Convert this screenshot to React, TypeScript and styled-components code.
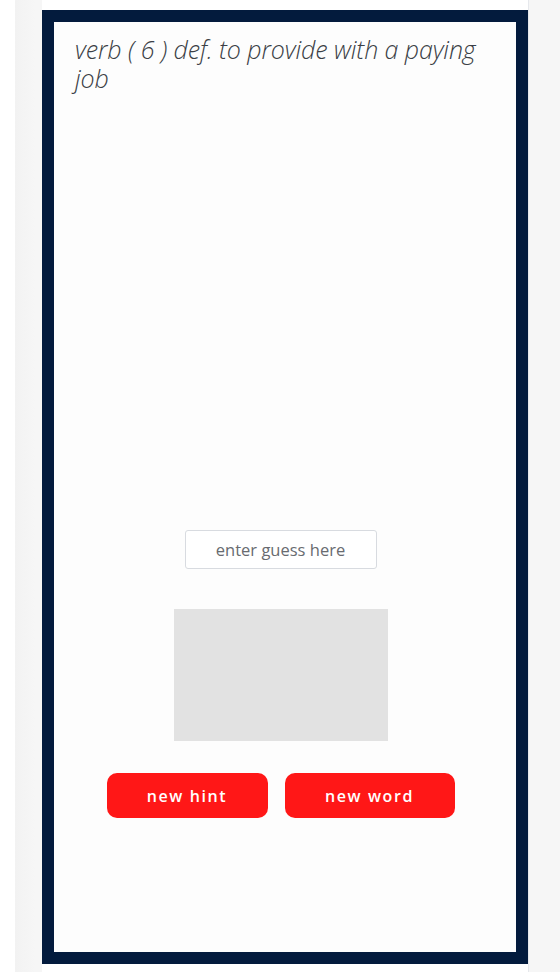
import styled, { createGlobalStyle } from "styled-components";

const GlobalStyle = createGlobalStyle`
  html, body {
    margin: 0;
    padding: 0;
    background: #ffffff;
  }
  body {
    font-family: "Open Sans", "Liberation Sans", sans-serif;
  }
`;

// 바깥 배경
const Page = styled.div`
  margin-left: 15px;
  width: 545px;
  height: 972px;
  background: linear-gradient(to right, #f2f2f2, #f6f6f6 20px, #f6f6f6);
  display: flex;
  padding-left: 27px;
  box-sizing: border-box;
`;

// 흰색 카드 컬럼
const Column = styled.div`
  width: 487px;
  background: #ffffff;
  padding-top: 10px;
  box-sizing: border-box;
  border-right: 1px solid #e6e8ec;
`;

// 남색 테두리 박스
const Frame = styled.div`
  height: 954px;
  border: 12px solid #031b3d;
  background: #fdfdfd;
  box-sizing: border-box;
  padding-right: 9px;
  display: flex;
  flex-direction: column;
  align-items: center;
`;

const Definition = styled.div`
  align-self: stretch;
  height: 63px;
  padding: 13px 20px 0 21px;
  font-size: 25px;
  font-style: italic;
  font-weight: 300;
  line-height: 29px;
  color: #3b3f46;
  letter-spacing: -0.1px;
`;

const GuessInput = styled.input`
  margin-top: 432px;
  width: 192px;
  height: 39px;
  box-sizing: border-box;
  border: 1px solid #d8dbe0;
  border-radius: 3px;
  background: #ffffff;
  font-family: "Open Sans", "Liberation Sans", sans-serif;
  font-size: 16.5px;
  text-align: center;
  color: #333;
  outline: none;

  &::placeholder {
    color: #686b70;
  }
`;

const HintBox = styled.div`
  margin-top: 40px;
  width: 214px;
  height: 132px;
  background: #e2e2e2;
`;

const ButtonRow = styled.div`
  margin-top: 32px;
  display: flex;
  gap: 17px;
`;

const ActionButton = styled.button<{ $width: number }>`
  width: ${(p) => p.$width}px;
  height: 45px;
  border: none;
  border-radius: 10px;
  background: #ff1717;
  color: #ffffff;
  font-family: "Open Sans", "Liberation Sans", sans-serif;
  font-size: 16px;
  font-weight: 600;
  letter-spacing: 1.6px;
  cursor: pointer;
`;

export default function App() {
  return (
    <>
      <GlobalStyle />
      <Page>
        <Column>
          <Frame>
            <Definition>verb ( 6 ) def. to provide with a paying job</Definition>
            <GuessInput placeholder="enter guess here" />
            <HintBox />
            <ButtonRow>
              <ActionButton $width={161}>new hint</ActionButton>
              <ActionButton $width={170}>new word</ActionButton>
            </ButtonRow>
          </Frame>
        </Column>
      </Page>
    </>
  );
}
